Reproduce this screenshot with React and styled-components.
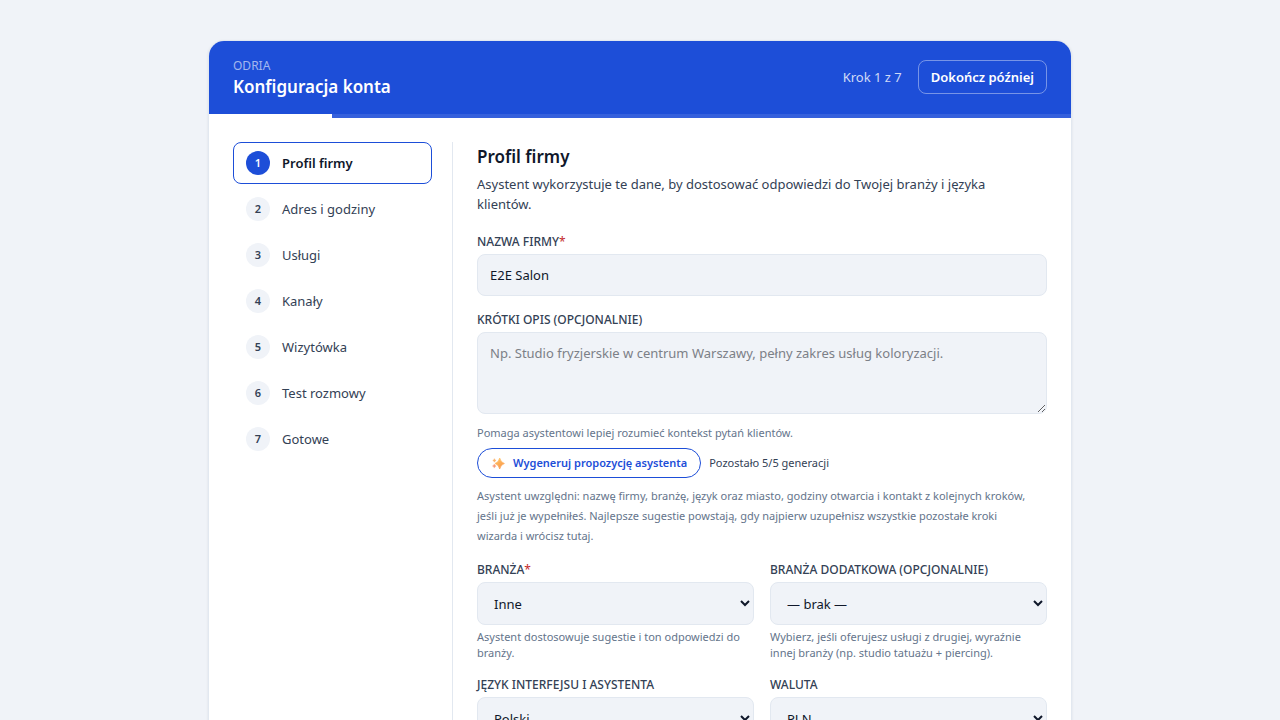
import React, { useState } from 'react';
import styled, { createGlobalStyle } from 'styled-components';

const GlobalStyle = createGlobalStyle`
  *, *::before, *::after {
    box-sizing: border-box;
  }

  body {
    margin: 0;
    background: #f0f3f8;
    color: #0f172a;
    font-family: 'Segoe UI', 'Noto Sans', 'Open Sans', sans-serif;
    font-size: 13px;
    line-height: 20px;
  }

  button, input, select, textarea {
    font: inherit;
    color: inherit;
  }

  h1, h2, p {
    margin: 0;
  }
`;

const Page = styled.main`
  max-width: 896px;
  margin: 0 auto;
  padding: 40px 16px;
`;

const Card = styled.div`
  background: #ffffff;
  border: 1px solid #e2e8f0;
  border-radius: 16px;
  overflow: hidden;
  box-shadow: 0 1px 3px rgba(15, 23, 42, 0.08);
`;

const Header = styled.header`
  display: flex;
  align-items: center;
  justify-content: space-between;
  padding: 16px 24px 15px;
  background: #1d4ed8;
  color: #ffffff;
`;

const Brand = styled.p`
  font-size: 12px;
  line-height: 18px;
  color: rgba(255, 255, 255, 0.6);
`;

const Title = styled.h1`
  font-size: 17px;
  line-height: 24px;
  font-weight: 600;
`;

const HeaderActions = styled.div`
  display: flex;
  align-items: center;
  gap: 16px;
  padding-bottom: 2px;
`;

const StepCount = styled.span`
  color: rgba(255, 255, 255, 0.8);
`;

const LaterButton = styled.button`
  padding: 6px 12px;
  border: 1px solid rgba(255, 255, 255, 0.4);
  border-radius: 8px;
  background: transparent;
  color: #ffffff;
  font-weight: 600;
  cursor: pointer;
`;

const Progress = styled.div`
  height: 4px;
  background: #3560dc;

  div {
    height: 100%;
    background: #ffffff;
  }
`;

const Body = styled.div`
  display: grid;
  grid-template-columns: 220px minmax(0, 1fr);
  gap: 24px;
  padding: 24px;
`;

const Steps = styled.nav`
  display: flex;
  flex-direction: column;
  gap: 4px;
  padding-right: 20px;
  border-right: 1px solid #e2e8f0;
`;

const StepButton = styled.button`
  display: flex;
  align-items: center;
  gap: 12px;
  padding: 8px 12px;
  border: 1px solid ${props => (props.$active ? '#1d4ed8' : 'transparent')};
  border-radius: 8px;
  background: transparent;
  color: ${props => (props.$active ? '#0f172a' : '#334155')};
  font-weight: ${props => (props.$active ? 600 : 400)};
  text-align: left;
  cursor: pointer;
`;

const StepNumber = styled.span`
  display: flex;
  align-items: center;
  justify-content: center;
  width: 24px;
  height: 24px;
  border-radius: 50%;
  background: ${props => (props.$active ? '#1d4ed8' : '#f0f3f8')};
  color: ${props => (props.$active ? '#ffffff' : '#334155')};
  font-size: 11px;
  font-weight: 600;
`;

const Form = styled.form`
  display: flex;
  flex-direction: column;
  gap: 16px;
`;

const Intro = styled.div`
  margin-bottom: 4px;
`;

const SectionTitle = styled.h2`
  margin-bottom: 2px;
  font-size: 17px;
  line-height: 30px;
  font-weight: 600;
`;

const Lead = styled.p`
  max-width: 556px;
  color: #334155;
`;

const Field = styled.div`
  display: flex;
  flex-direction: column;
  gap: 4px;
`;

const FieldRow = styled.div`
  display: grid;
  grid-template-columns: repeat(2, minmax(0, 1fr));
  gap: 16px;
`;

const Label = styled.label`
  color: #334155;
  font-size: 12px;
  line-height: 16px;
  font-weight: 500;
  text-transform: uppercase;
`;

const Required = styled.span`
  color: #c42b2b;
  font-weight: 400;
`;

const Input = styled.input`
  width: 100%;
  padding: 10px 12px;
  border: 1px solid #e2e8f0;
  border-radius: 8px;
  background: #f0f3f8;
`;

const TextArea = styled.textarea`
  display: block;
  width: 100%;
  margin-bottom: 7px;
  padding: 10px 12px;
  border: 1px solid #e2e8f0;
  border-radius: 8px;
  background: #f0f3f8;
  resize: vertical;

  &::placeholder {
    color: #7c8087;
  }
`;

const Select = styled.select`
  width: 100%;
  height: 43px;
  padding: 10px 12px;
  border: 1px solid #e2e8f0;
  border-radius: 8px;
  background: #f0f3f8;
`;

const Hint = styled.p`
  max-width: 556px;
  color: #64748b;
  font-size: 11px;
  line-height: ${props => (props.$relaxed ? 20 : 16)}px;
`;

const Generate = styled.div`
  display: flex;
  align-items: center;
  gap: 8px;
  padding: 3px 0 4px;
`;

const GenerateButton = styled.button`
  display: flex;
  align-items: center;
  gap: 7px;
  padding: 6px 13px 6px 12px;
  border: 1px solid #1d4ed8;
  border-radius: 15px;
  background: #ffffff;
  color: #1d4ed8;
  font-size: 11px;
  line-height: 16px;
  font-weight: 600;
  cursor: pointer;
`;

const Remaining = styled.span`
  color: #334155;
  font-size: 11px;
`;

const steps = [
    'Profil firmy',
    'Adres i godziny',
    'Usługi',
    'Kanały',
    'Wizytówka',
    'Test rozmowy',
    'Gotowe'
];

const Sparkles = () => (
    <svg width="16" height="16" viewBox="0 0 16 16" aria-hidden="true">
        <defs>
            <linearGradient id="spark" x1="0" y1="0" x2="0.4" y2="1">
                <stop offset="0" stopColor="#ffc766" />
                <stop offset="1" stopColor="#fb9a4b" />
            </linearGradient>
        </defs>
        <path d="M9.7 3Q10.7 7.4 14.4 8.5Q10.7 9.6 9.7 14Q8.7 9.6 5 8.5Q8.7 7.4 9.7 3Z" fill="url(#spark)" stroke="url(#spark)" strokeWidth="0.7" strokeLinejoin="round" />
        <path d="M4.4 3.6Q4.8 5 6.1 5.4Q4.8 5.8 4.4 7.2Q4 5.8 2.7 5.4Q4 5 4.4 3.6Z" fill="#fbb26a" stroke="#fbb26a" strokeWidth="0.3" />
        <path d="M4.3 8.9Q4.8 10.5 6.2 11Q4.8 11.5 4.3 13.1Q3.8 11.5 2.4 11Q3.8 10.5 4.3 8.9Z" fill="#f79a78" stroke="#f79a78" strokeWidth="0.3" />
    </svg>
);

const App = () => {
    const [activeStep, setActiveStep] = useState(0);
    const [name, setName] = useState('E2E Salon');

    return (
        <>
            <GlobalStyle />
            <Page>
                <Card>
                    <Header>
                        <div>
                            <Brand>ODRIA</Brand>
                            <Title>Konfiguracja konta</Title>
                        </div>
                        <HeaderActions>
                            <StepCount>Krok {activeStep + 1} z {steps.length}</StepCount>
                            <LaterButton type="button">Dokończ później</LaterButton>
                        </HeaderActions>
                    </Header>
                    <Progress>
                        <div style={{ width: `${((activeStep + 1) / steps.length) * 100}%` }} />
                    </Progress>

                    <Body>
                        <Steps>
                            {steps.map((step, index) => (
                                <StepButton
                                    key={step}
                                    type="button"
                                    $active={index === activeStep}
                                    onClick={() => setActiveStep(index)}
                                >
                                    <StepNumber $active={index === activeStep}>{index + 1}</StepNumber>
                                    {step}
                                </StepButton>
                            ))}
                        </Steps>

                        <Form onSubmit={e => e.preventDefault()}>
                            <Intro>
                                <SectionTitle>Profil firmy</SectionTitle>
                                <Lead>
                                    Asystent wykorzystuje te dane, by dostosować odpowiedzi do Twojej branży i języka klientów.
                                </Lead>
                            </Intro>

                            <Field>
                                <Label htmlFor="name">Nazwa firmy<Required>*</Required></Label>
                                <Input id="name" value={name} onChange={e => setName(e.target.value)} />
                            </Field>

                            <Field>
                                <Label htmlFor="description">Krótki opis (opcjonalnie)</Label>
                                <TextArea
                                    id="description"
                                    rows={3}
                                    placeholder="Np. Studio fryzjerskie w centrum Warszawy, pełny zakres usług koloryzacji."
                                />
                                <Hint>Pomaga asystentowi lepiej rozumieć kontekst pytań klientów.</Hint>
                                <Generate>
                                    <GenerateButton type="button">
                                        <Sparkles />
                                        Wygeneruj propozycję asystenta
                                    </GenerateButton>
                                    <Remaining>Pozostało 5/5 generacji</Remaining>
                                </Generate>
                                <Hint $relaxed>
                                    Asystent uwzględni: nazwę firmy, branżę, język oraz miasto, godziny otwarcia i kontakt z kolejnych kroków, jeśli już je wypełniłeś. Najlepsze sugestie powstają, gdy najpierw uzupełnisz wszystkie pozostałe kroki wizarda i wrócisz tutaj.
                                </Hint>
                            </Field>

                            <FieldRow>
                                <Field>
                                    <Label htmlFor="industry">Branża<Required>*</Required></Label>
                                    <Select id="industry">
                                        <option>Inne</option>
                                    </Select>
                                    <Hint>Asystent dostosowuje sugestie i ton odpowiedzi do branży.</Hint>
                                </Field>
                                <Field>
                                    <Label htmlFor="secondary">Branża dodatkowa (opcjonalnie)</Label>
                                    <Select id="secondary">
                                        <option>— brak —</option>
                                    </Select>
                                    <Hint>Wybierz, jeśli oferujesz usługi z drugiej, wyraźnie innej branży (np. studio tatuażu + piercing).</Hint>
                                </Field>
                                <Field>
                                    <Label htmlFor="language">Język interfejsu i asystenta</Label>
                                    <Select id="language">
                                        <option>Polski</option>
                                    </Select>
                                </Field>
                                <Field>
                                    <Label htmlFor="currency">Waluta</Label>
                                    <Select id="currency">
                                        <option>PLN</option>
                                    </Select>
                                </Field>
                            </FieldRow>
                        </Form>
                    </Body>
                </Card>
            </Page>
        </>
    );
};

export default App;
